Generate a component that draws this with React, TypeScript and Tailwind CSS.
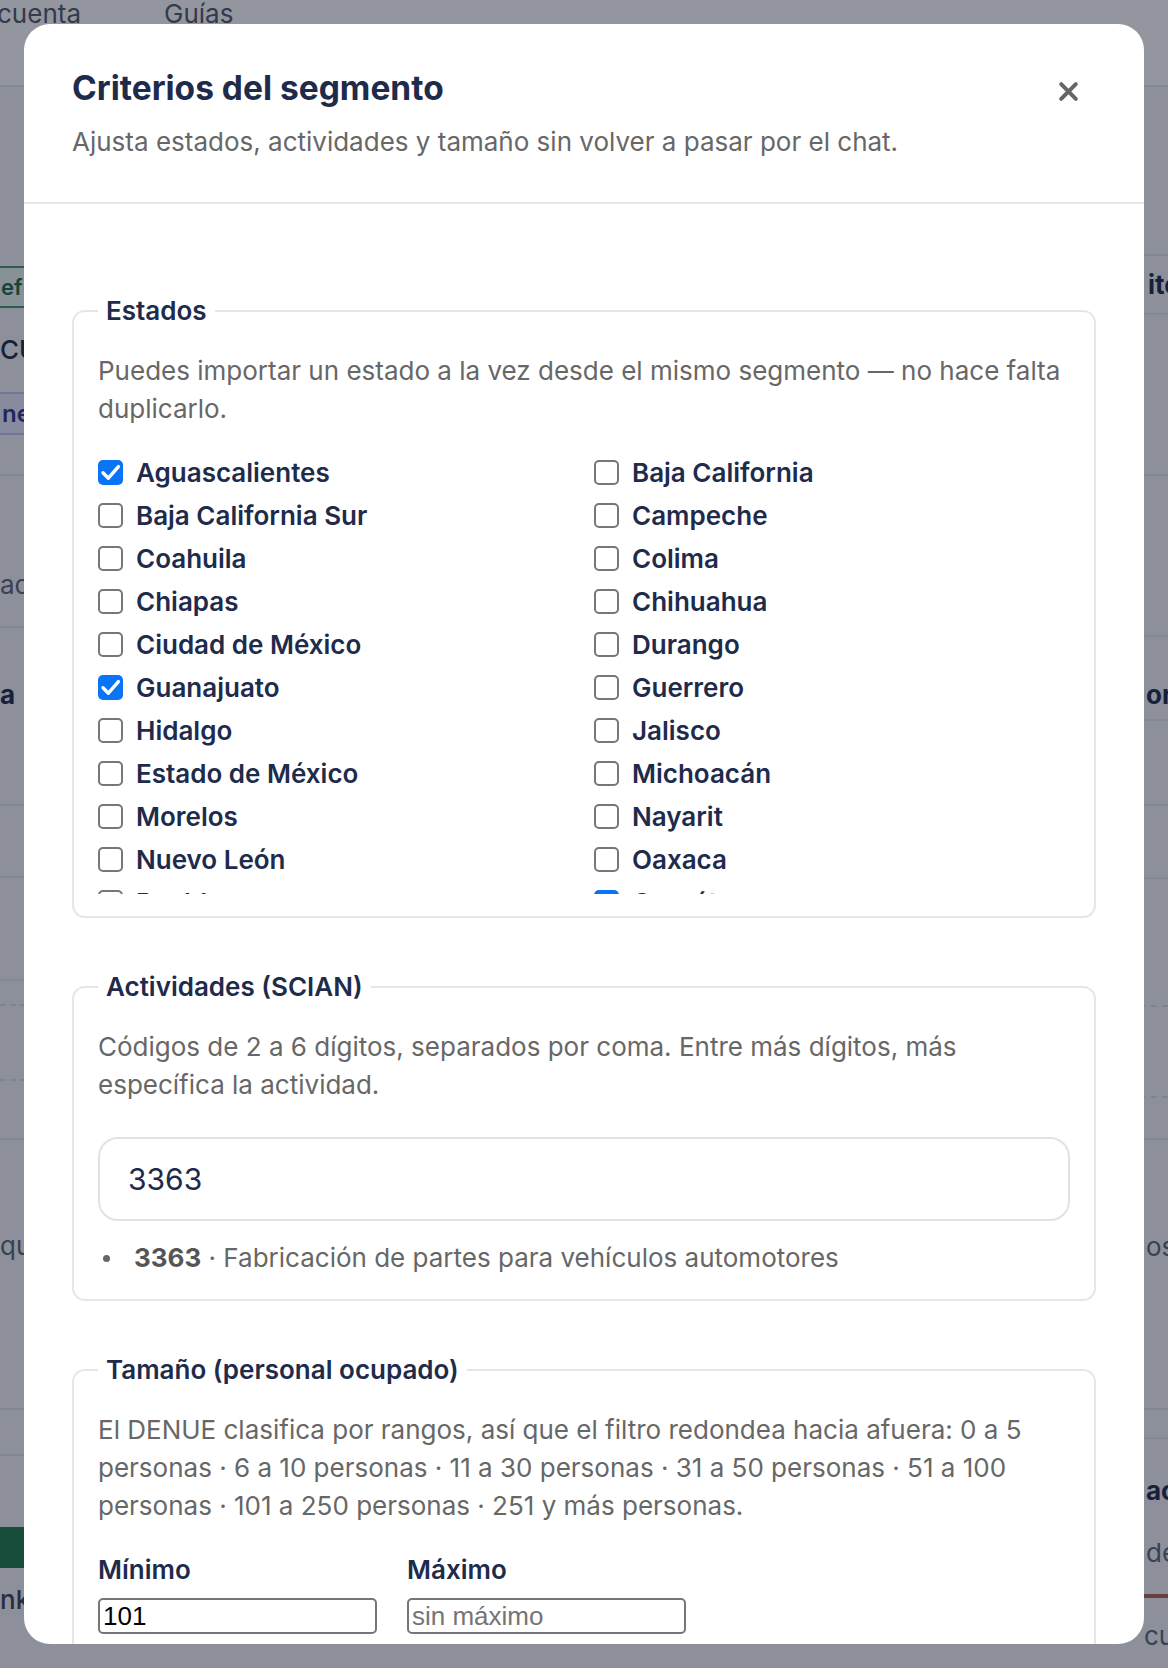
import React from "react";

const STATES: [string, boolean][] = [
  ["Aguascalientes", true],
  ["Baja California", false],
  ["Baja California Sur", false],
  ["Campeche", false],
  ["Coahuila", false],
  ["Colima", false],
  ["Chiapas", false],
  ["Chihuahua", false],
  ["Ciudad de México", false],
  ["Durango", false],
  ["Guanajuato", true],
  ["Guerrero", false],
  ["Hidalgo", false],
  ["Jalisco", false],
  ["Estado de México", false],
  ["Michoacán", false],
  ["Morelos", false],
  ["Nayarit", false],
  ["Nuevo León", false],
  ["Oaxaca", false],
  ["Puebla", false],
  ["Querétaro", true],
  ["Quintana Roo", false],
  ["San Luis Potosí", false],
  ["Sinaloa", false],
  ["Sonora", false],
];

function CheckBox({ checked }: { checked: boolean }) {
  if (checked) {
    return (
      <span className="flex h-[25px] w-[25px] shrink-0 items-center justify-center rounded-[5px] bg-[#0a74f7]">
        <svg viewBox="0 0 25 25" className="h-[25px] w-[25px]">
          <path
            d="M5 12.8l5.4 5.4L20.4 6.6"
            fill="none"
            stroke="white"
            strokeWidth="3.4"
            strokeLinecap="round"
            strokeLinejoin="round"
          />
        </svg>
      </span>
    );
  }
  return <span className="h-[25px] w-[25px] shrink-0 rounded-[5px] border-2 border-[#777777] bg-white" />;
}

function Backdrop() {
  return (
    <div className="h-full w-full bg-[#f4f5f7]">
      <div className="flex h-[87px] items-start gap-[83px] border-b-2 border-[#e3e5e9] bg-white text-[26px] leading-[28px] text-[#4f5868]">
        <span className="-ml-[3px]">cuenta</span>
        <span>Guías</span>
      </div>
      <div className="flex">
        {/* left strip of the page behind */}
        <div className="w-[560px] text-[26px] leading-[30px]">
          <div className="-ml-[20px] mt-[179px] flex h-[42px] w-[300px] items-center rounded-[10px] border-2 border-[#3f9b6e] bg-[#eaf6ef] pl-[19px] text-[22px] font-semibold text-[#1a6b45]">
            efinir
          </div>
          <div className="flex h-[84px] items-center font-medium text-[#1e2b4b]">CUIT</div>
          <div className="-ml-[20px] flex h-[43px] w-[300px] items-center rounded-[10px] border-2 border-[#c7c4ef] bg-[#ecebfb] pl-[20px] text-[24px] font-semibold text-[#34347f]">
            nes
          </div>
          <div className="h-[41px] border-b-2 border-[#e3e5e9]" />
          <div className="h-[152px] border-b-2 border-[#e3e5e9] pt-[94px] text-[#5b6473]">ado</div>
          <div className="h-[178px] border-b-2 border-[#e3e5e9] pt-[52px] font-bold text-[#1e2b4b]">a</div>
          <div className="h-[72px] border-b-2 border-[#e3e5e9]" />
          <div className="h-[103px] border-b-2 border-[#e3e5e9]" />
          <div className="h-[25px] border-b-2 border-dashed border-[#d9dce2]" />
          <div className="h-[75px] border-b-2 border-dashed border-[#d9dce2]" />
          <div className="h-[59px] border-b-2 border-[#e3e5e9]" />
          <div className="h-[270px] border-b-2 border-[#e3e5e9] pt-[91px] text-[#5b6473]">que</div>
          <div className="h-[46px] border-b-2 border-[#e3e5e9]" />
          <div className="-ml-[20px] mt-[71px] h-[41px] w-[300px] rounded-[8px] bg-[#1f7a4c]" />
          <div className="mt-[17px] font-medium text-[#3b4352]">nk</div>
        </div>
        {/* right strip of the page behind */}
        <div className="ml-auto w-[40px] text-[26px] leading-[30px]">
          <div className="h-[169px] border-b-2 border-[#e3e5e9]" />
          <div className="flex h-[59px] items-center border-b-2 border-[#e3e5e9] pl-[20px] font-bold text-[#1e2b4b]">
            ite
          </div>
          <div className="h-[161px] border-b-2 border-[#e3e5e9]" />
          <div className="h-[161px] border-b-2 border-[#e3e5e9]" />
          <div className="h-[84px] border-b-2 border-[#e3e5e9] pl-[18px] pt-[43px] font-bold text-[#1e2b4b]">or</div>
          <div className="h-[85px] border-b-2 border-[#e3e5e9]" />
          <div className="h-[73px] border-b-2 border-[#e3e5e9]" />
          <div className="h-[128px] border-b-2 border-dashed border-[#d9dce2]" />
          <div className="h-[91px] border-b-2 border-dashed border-[#d9dce2]" />
          <div className="h-[42px] border-b-2 border-[#e3e5e9]" />
          <div className="h-[270px] border-b-2 border-[#e3e5e9] pl-[18px] pt-[92px] text-[#5b6473]">os</div>
          <div className="h-[29px] border-b-2 border-[#e3e5e9]" />
          <div className="mt-[37px] pl-[18px] font-bold text-[#1e2b4b]">act</div>
          <div className="mt-[32px] pl-[18px] text-[#5b6473]">de</div>
          <div className="mt-[26px] h-[4px] bg-[#b5654f]" />
          <div className="mt-[23px] pl-[16px] text-[#5b6473]">cue</div>
        </div>
      </div>
    </div>
  );
}

function Section({ title, children }: { title: string; children: React.ReactNode }) {
  return (
    <fieldset className="rounded-[13px] border-2 border-[#e7e7e2] px-[24px] pb-[22px] pt-[22px]">
      <legend className="px-[8px] text-[26px] font-semibold leading-[38px] text-[#1e2b4b]">{title}</legend>
      {children}
    </fieldset>
  );
}

export default function App() {
  return (
    <div className="relative h-[1668px] w-[1168px] overflow-hidden font-['Inter',sans-serif]">
      <Backdrop />
      <div className="absolute inset-0 bg-[rgba(15,23,42,0.45)]" />

      <div className="absolute left-[24px] top-[24px] flex h-[1620px] w-[1120px] flex-col overflow-hidden rounded-[26px] bg-white">
        <header className="flex items-start justify-between border-b-2 border-[#e8e8e3] pb-[41px] pl-[48px] pr-[48px] pt-[43px]">
          <div>
            <h2 className="text-[33.5px] font-bold leading-[42px] text-[#1e2b4b]">Criterios del segmento</h2>
            <p className="mt-[14px] text-[26px] leading-[38px] text-[#676767]">
              Ajusta estados, actividades y tamaño sin volver a pasar por el chat.
            </p>
          </div>
          <button className="mr-[8px] mt-[4px] flex h-[40px] w-[40px] items-center justify-center">
            <svg viewBox="0 0 22 22" className="h-[23px] w-[23px]">
              <path d="M4 4l14 14M18 4L4 18" stroke="#666666" strokeWidth="3.8" strokeLinecap="round" />
            </svg>
          </button>
        </header>

        <div className="flex-1 overflow-hidden px-[48px] pt-[88px]">
          <Section title="Estados">
            <p className="text-[26px] leading-[38px] text-[#676767]">
              Puedes importar un estado a la vez desde el mismo segmento — no hace falta duplicarlo.
            </p>
            <div className="mt-[23px] h-[443px] overflow-hidden">
              <div className="grid grid-cols-2 gap-x-[20px]">
                {STATES.map(([name, checked]) => (
                  <label key={name} className="flex h-[43px] items-center gap-[13px]">
                    <CheckBox checked={checked} />
                    <span className="text-[26px] font-semibold leading-none text-[#1e2b4b]">{name}</span>
                  </label>
                ))}
              </div>
            </div>
          </Section>

          <div className="mt-[50px]">
            <Section title="Actividades (SCIAN)">
              <p className="text-[26px] leading-[38px] text-[#676767]">
                Códigos de 2 a 6 dígitos, separados por coma. Entre más dígitos, más específica la actividad.
              </p>
              <div className="mt-[33px] flex h-[84px] items-center rounded-[20px] border-2 border-[#e3e3de] px-[28px] text-[30px] text-[#1e2b4b]">
                3363
              </div>
              <ul className="mt-[18px]">
                <li className="flex items-center pl-[5px] text-[26px] leading-[38px] text-[#676767]">
                  <span className="mr-[24px] h-[7px] w-[7px] rounded-full bg-[#676767]" />
                  <span>
                    <b className="font-bold text-[#555555]">3363</b> · Fabricación de partes para vehículos automotores
                  </span>
                </li>
              </ul>
            </Section>
          </div>

          <div className="mt-[50px]">
            <Section title="Tamaño (personal ocupado)">
              <p className="text-[26px] leading-[38px] text-[#676767]">
                El DENUE clasifica por rangos, así que el filtro redondea hacia afuera: 0 a 5 personas · 6 a 10
                personas · 11 a 30 personas · 31 a 50 personas · 51 a 100 personas · 101 a 250 personas · 251 y más
                personas.
              </p>
              <div className="mt-[29px] flex gap-[30px]">
                <label className="flex flex-col">
                  <span className="text-[26px] font-semibold leading-[32px] text-[#1e2b4b]">Mínimo</span>
                  <input
                    defaultValue="101"
                    className="mt-[12px] h-[36px] w-[279px] rounded-[5px] border-2 border-[#767676] px-[3px] font-['Liberation_Sans',Arial,sans-serif] text-[26px] text-black"
                  />
                </label>
                <label className="flex flex-col">
                  <span className="text-[26px] font-semibold leading-[32px] text-[#1e2b4b]">Máximo</span>
                  <input
                    placeholder="sin máximo"
                    className="mt-[12px] h-[36px] w-[279px] rounded-[5px] border-2 border-[#767676] px-[3px] font-['Liberation_Sans',Arial,sans-serif] text-[26px] text-black placeholder:text-[#757575]"
                  />
                </label>
              </div>
            </Section>
          </div>
        </div>
      </div>
    </div>
  );
}
